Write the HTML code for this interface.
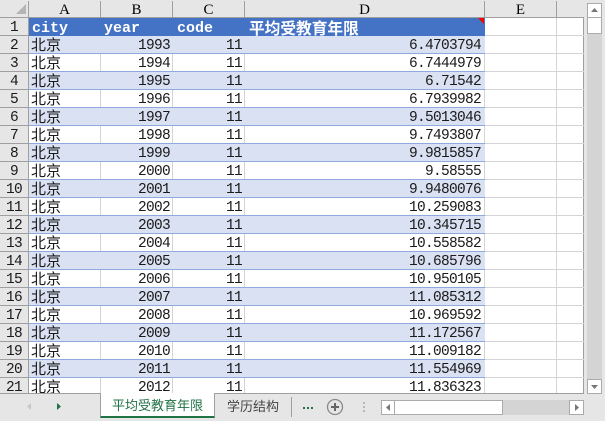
<!DOCTYPE html>
<html><head><meta charset="utf-8">
<style>
html,body{margin:0;padding:0}
body{width:605px;height:421px;position:relative;overflow:hidden;background:#e6e6e6;font-family:"Liberation Mono","WenQuanYi Zen Hei",monospace;color:#000}
.hdr{position:absolute;top:0;left:0;width:584px;height:17px;background:#e6e6e6;border-bottom:1px solid #9f9f9f}
.hdr span{position:absolute;top:1px;line-height:18px;text-align:center;font-family:"Liberation Serif",serif;font-size:15px;border-right:1px solid #9f9f9f;box-sizing:border-box;height:17px}
.sheet{position:absolute;left:29px;top:18px;width:555px;height:375px;background:#fff;overflow:hidden;border-right:0}
.v{position:absolute;top:0;width:1px;height:375px;background:#d4d4d4}
.h{position:absolute;left:456px;width:99px;height:1px;background:#d4d4d4}
.r{position:absolute;left:0;width:456px;height:18px;box-sizing:border-box;border-bottom:1px solid #8ea9db;font-size:14.5px;line-height:20px;letter-spacing:-.7px;color:#1a1a1a}
.b{background:#d9e1f2}
.r span{position:absolute;top:0;white-space:nowrap}
.a{left:2px;font-family:"WenQuanYi Zen Hei","Noto Sans CJK SC",sans-serif;font-size:15px;line-height:18px;letter-spacing:0}
.y{right:315px}.c{right:243px}.d{right:4px}
.t{position:absolute;left:0;top:0;width:456px;height:18px;background:#4472c4;color:#fff;font-weight:bold;font-size:15px;line-height:22px;letter-spacing:0}
.t span{position:absolute;top:0;white-space:nowrap}
.tri{position:absolute;left:449px;top:0;width:0;height:0;border-top:6px solid #f00;border-left:6px solid transparent}
.rh{position:absolute;left:0;width:28px;height:17px;border-bottom:1px solid #9f9f9f;border-right:1px solid #9f9f9f;text-align:center;font-size:14.5px;letter-spacing:-.7px;line-height:20px;background:#e6e6e6;color:#1a1a1a}
.corner{position:absolute;left:16px;top:4px;width:0;height:0;border-bottom:10px solid #b4b4b4;border-left:10px solid transparent;z-index:2}
.bot{position:absolute;left:0;top:393px;width:605px;height:28px;background:#e6e6e6}
.line{position:absolute;left:0;top:393px;width:584px;height:1px;background:#9f9f9f}
.tab{position:absolute;left:100px;top:393px;width:115px;height:25px;background:#fff;border-left:1px solid #9f9f9f;border-right:1px solid #9f9f9f;box-sizing:border-box;border-bottom:2px solid #217346;text-align:center;color:#217346;font:13px/24px "Noto Sans CJK SC",sans-serif}
.tab2{position:absolute;left:227px;top:394px;font:13px/24px "Noto Sans CJK SC",sans-serif;color:#444}
.sb{position:absolute;background:#fff;border:1px solid #ababab;box-sizing:border-box}
</style></head><body>
<div class="hdr">
<div class="corner"></div>
<span style="left:0;width:29px"></span>
<span style="left:29px;width:72px">A</span>
<span style="left:101px;width:72px">B</span>
<span style="left:173px;width:72px">C</span>
<span style="left:245px;width:240px">D</span>
<span style="left:485px;width:72px">E</span>
<span style="left:557px;width:27px;border-right:0"></span>
</div>
<div class="sheet">
<div class="v" style="left:71px"></div><div class="v" style="left:143px"></div><div class="v" style="left:215px"></div><div class="v" style="left:455px"></div><div class="v" style="left:527px"></div><div class="v" style="left:554px;background:#9f9f9f"></div>
<div class="h" style="top:17px"></div><div class="h" style="top:35px"></div><div class="h" style="top:53px"></div><div class="h" style="top:71px"></div><div class="h" style="top:89px"></div><div class="h" style="top:107px"></div><div class="h" style="top:125px"></div><div class="h" style="top:143px"></div><div class="h" style="top:161px"></div><div class="h" style="top:179px"></div><div class="h" style="top:197px"></div><div class="h" style="top:215px"></div><div class="h" style="top:233px"></div><div class="h" style="top:251px"></div><div class="h" style="top:269px"></div><div class="h" style="top:287px"></div><div class="h" style="top:305px"></div><div class="h" style="top:323px"></div><div class="h" style="top:341px"></div><div class="h" style="top:359px"></div>
<div class="t"><span style="left:3px">city</span><span style="left:75px">year</span><span style="left:148px">code</span><span style="left:220px;font-family:'WenQuanYi Zen Hei','Noto Sans CJK SC',sans-serif;font-size:15.7px;line-height:20px">平均受教育年限</span><div class="tri"></div></div>
<div class="r b" style="top:18px"><span class="a">北京</span><span class="y">1993</span><span class="c">11</span><span class="d">6.4703794</span></div>
<div class="r" style="top:36px"><span class="a">北京</span><span class="y">1994</span><span class="c">11</span><span class="d">6.7444979</span></div>
<div class="r b" style="top:54px"><span class="a">北京</span><span class="y">1995</span><span class="c">11</span><span class="d">6.71542</span></div>
<div class="r" style="top:72px"><span class="a">北京</span><span class="y">1996</span><span class="c">11</span><span class="d">6.7939982</span></div>
<div class="r b" style="top:90px"><span class="a">北京</span><span class="y">1997</span><span class="c">11</span><span class="d">9.5013046</span></div>
<div class="r" style="top:108px"><span class="a">北京</span><span class="y">1998</span><span class="c">11</span><span class="d">9.7493807</span></div>
<div class="r b" style="top:126px"><span class="a">北京</span><span class="y">1999</span><span class="c">11</span><span class="d">9.9815857</span></div>
<div class="r" style="top:144px"><span class="a">北京</span><span class="y">2000</span><span class="c">11</span><span class="d">9.58555</span></div>
<div class="r b" style="top:162px"><span class="a">北京</span><span class="y">2001</span><span class="c">11</span><span class="d">9.9480076</span></div>
<div class="r" style="top:180px"><span class="a">北京</span><span class="y">2002</span><span class="c">11</span><span class="d">10.259083</span></div>
<div class="r b" style="top:198px"><span class="a">北京</span><span class="y">2003</span><span class="c">11</span><span class="d">10.345715</span></div>
<div class="r" style="top:216px"><span class="a">北京</span><span class="y">2004</span><span class="c">11</span><span class="d">10.558582</span></div>
<div class="r b" style="top:234px"><span class="a">北京</span><span class="y">2005</span><span class="c">11</span><span class="d">10.685796</span></div>
<div class="r" style="top:252px"><span class="a">北京</span><span class="y">2006</span><span class="c">11</span><span class="d">10.950105</span></div>
<div class="r b" style="top:270px"><span class="a">北京</span><span class="y">2007</span><span class="c">11</span><span class="d">11.085312</span></div>
<div class="r" style="top:288px"><span class="a">北京</span><span class="y">2008</span><span class="c">11</span><span class="d">10.969592</span></div>
<div class="r b" style="top:306px"><span class="a">北京</span><span class="y">2009</span><span class="c">11</span><span class="d">11.172567</span></div>
<div class="r" style="top:324px"><span class="a">北京</span><span class="y">2010</span><span class="c">11</span><span class="d">11.009182</span></div>
<div class="r b" style="top:342px"><span class="a">北京</span><span class="y">2011</span><span class="c">11</span><span class="d">11.554969</span></div>
<div class="r" style="top:360px;border-bottom:0"><span class="a">北京</span><span class="y">2012</span><span class="c">11</span><span class="d">11.836323</span></div>
</div>
<div class="rh" style="top:18px">1</div><div class="rh" style="top:36px">2</div><div class="rh" style="top:54px">3</div><div class="rh" style="top:72px">4</div><div class="rh" style="top:90px">5</div><div class="rh" style="top:108px">6</div><div class="rh" style="top:126px">7</div><div class="rh" style="top:144px">8</div><div class="rh" style="top:162px">9</div><div class="rh" style="top:180px">10</div><div class="rh" style="top:198px">11</div><div class="rh" style="top:216px">12</div><div class="rh" style="top:234px">13</div><div class="rh" style="top:252px">14</div><div class="rh" style="top:270px">15</div><div class="rh" style="top:288px">16</div><div class="rh" style="top:306px">17</div><div class="rh" style="top:324px">18</div><div class="rh" style="top:342px">19</div><div class="rh" style="top:360px">20</div><div class="rh" style="top:378px">21</div>
<div class="bot"></div>
<div class="line"></div>
<div class="tab">平均受教育年限</div>
<div class="tab2">学历结构</div>
<div style="position:absolute;left:291px;top:397px;width:1px;height:20px;background:#9f9f9f"></div>
<svg style="position:absolute;left:0;top:393px" width="605" height="28">
<path d="M31 10v7l-4-3.500z" fill="#c8c8c8"/>
<path d="M57 10v7l4-3.500z" fill="#217346"/>
<rect x="303" y="14" width="2" height="2" fill="#217346"/><rect x="307" y="14" width="2" height="2" fill="#217346"/><rect x="311" y="14" width="2" height="2" fill="#217346"/>
<circle cx="335" cy="14" r="7.500" fill="none" stroke="#8a8a8a" stroke-width="1.300"/>
<path d="M331 14h8M335 10v8" stroke="#666" stroke-width="2" fill="none"/>
<rect x="363" y="9" width="2" height="2" fill="#b8b8b8"/><rect x="363" y="13" width="2" height="2" fill="#b8b8b8"/><rect x="363" y="17" width="2" height="2" fill="#b8b8b8"/>
</svg>
<div style="position:absolute;left:381px;top:400px;width:203px;height:15px;background:#d4d4d4"></div>
<div class="sb" style="left:381px;top:400px;width:14px;height:15px"><svg width="12" height="13" style="display:block"><path d="M8 3v7l-4-3.500z" fill="#777"/></svg></div>
<div class="sb" style="left:395px;top:400px;width:108px;height:15px;border-left:0"></div>
<div class="sb" style="left:569px;top:400px;width:15px;height:15px"><svg width="13" height="13" style="display:block"><path d="M5 3v7l4-3.500z" fill="#777"/></svg></div>
<div style="position:absolute;left:584px;top:0;width:21px;height:393px;background:#e6e6e6"></div>
<div style="position:absolute;left:587px;top:18px;width:15px;height:362px;background:#d4d4d4"></div>
<div class="sb" style="left:587px;top:3px;width:15px;height:15px"><svg width="13" height="13" style="display:block"><path d="M3 8h7l-3.500-4z" fill="#777"/></svg></div>
<div class="sb" style="left:587px;top:18px;width:15px;height:16px;border-top:0"></div>
<div class="sb" style="left:587px;top:379px;width:15px;height:15px"><svg width="13" height="13" style="display:block"><path d="M3 5h7l-3.500 4z" fill="#777"/></svg></div>
</body></html>
